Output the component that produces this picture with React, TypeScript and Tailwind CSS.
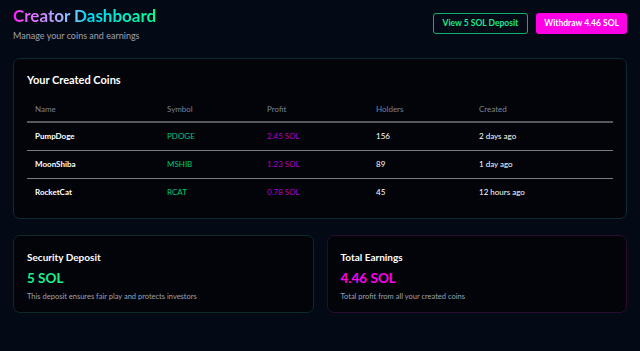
const coins = [
  { name: 'PumpDoge', symbol: 'PDOGE', profit: '2.45 SOL', holders: 156, created: '2 days ago' },
  { name: 'MoonShiba', symbol: 'MSHIB', profit: '1.23 SOL', holders: 89, created: '1 day ago' },
  { name: 'RocketCat', symbol: 'RCAT', profit: '0.78 SOL', holders: 45, created: '12 hours ago' },
]

export default function App() {
  return (
    <div
      className="min-h-[351px] w-[640px] bg-[#040916] px-[13px] pt-[5px] text-white"
      style={{ fontFamily: 'Lato, "Noto Sans", sans-serif' }}
    >
      {/* Header */}
      <div className="flex items-start justify-between">
        <div>
          <h1 className="w-fit bg-gradient-to-r from-[#ff00ff] via-[#00d9ff] to-[#00ff8c] bg-clip-text text-[17px] font-bold leading-[22px] text-transparent">
            Creator Dashboard
          </h1>
          <p className="mt-[2px] text-[9px] leading-[13px] text-[#9ca3af]">Manage your coins and earnings</p>
        </div>
        <div className="mt-[8px] flex gap-[8px]">
          <button className="h-[21px] rounded-[3px] border border-[#10b070] px-[9px] text-[8.5px] font-bold text-[#1ee890]">
            View 5 SOL Deposit
          </button>
          <button className="h-[21px] rounded-[3px] bg-[#ff00e6] px-[8px] text-[8.5px] font-bold text-white">
            Withdraw 4.46 SOL
          </button>
        </div>
      </div>

      {/* Coins table */}
      <div className="mt-[16px] rounded-[7px] border border-[#0d2a30] bg-[#02040a] px-[13px] pt-[13px] pb-[12px]">
        <h3 className="text-[11px] font-bold leading-[16px] text-white">Your Created Coins</h3>
        <table className="mt-[8px] w-full table-fixed text-[8px]">
          <thead>
            <tr className="h-[26px] border-b-2 border-[#55585e] text-left text-[#7b8394]">
              <th className="w-[132px] pl-[8px] font-normal">Name</th>
              <th className="w-[100px] pl-[8px] font-normal">Symbol</th>
              <th className="w-[109px] pl-[8px] font-normal">Profit</th>
              <th className="w-[103px] pl-[8px] font-normal">Holders</th>
              <th className="pl-[8px] font-normal">Created</th>
            </tr>
          </thead>
          <tbody>
            {coins.map((c, i) => (
              <tr key={c.name} className={`h-[28px] ${i < coins.length - 1 ? 'border-b border-[#7a7d83]' : ''}`}>
                <td className="pl-[8px] font-bold text-white">{c.name}</td>
                <td className="pl-[8px] text-[#00c878]">{c.symbol}</td>
                <td className="pl-[8px] text-[#b400c8]">{c.profit}</td>
                <td className="pl-[8px] text-white">{c.holders}</td>
                <td className="pl-[8px] text-white">{c.created}</td>
              </tr>
            ))}
          </tbody>
        </table>
      </div>

      {/* Stats */}
      <div className="mt-[16px] grid grid-cols-2 gap-[13px]">
        <div className="h-[78px] rounded-[7px] border border-[#0c2a26] bg-[#02040a] px-[13px] pt-[14px]">
          <h3 className="text-[10px] font-bold leading-[14px] text-white">Security Deposit</h3>
          <p className="mt-[5px] text-[13.5px] font-bold leading-[18px] text-[#19f090]">5 SOL</p>
          <p className="mt-[4px] text-[7.5px] leading-[11px] text-[#9ca3af]">This deposit ensures fair play and protects investors</p>
        </div>
        <div className="h-[78px] rounded-[7px] border border-[#2a0c30] bg-[#02040a] px-[13px] pt-[14px]">
          <h3 className="text-[10px] font-bold leading-[14px] text-white">Total Earnings</h3>
          <p className="mt-[5px] text-[13.5px] font-bold leading-[18px] text-[#ff00f0]">4.46 SOL</p>
          <p className="mt-[4px] text-[7.5px] leading-[11px] text-[#9ca3af]">Total profit from all your created coins</p>
        </div>
      </div>
    </div>
  )
}
